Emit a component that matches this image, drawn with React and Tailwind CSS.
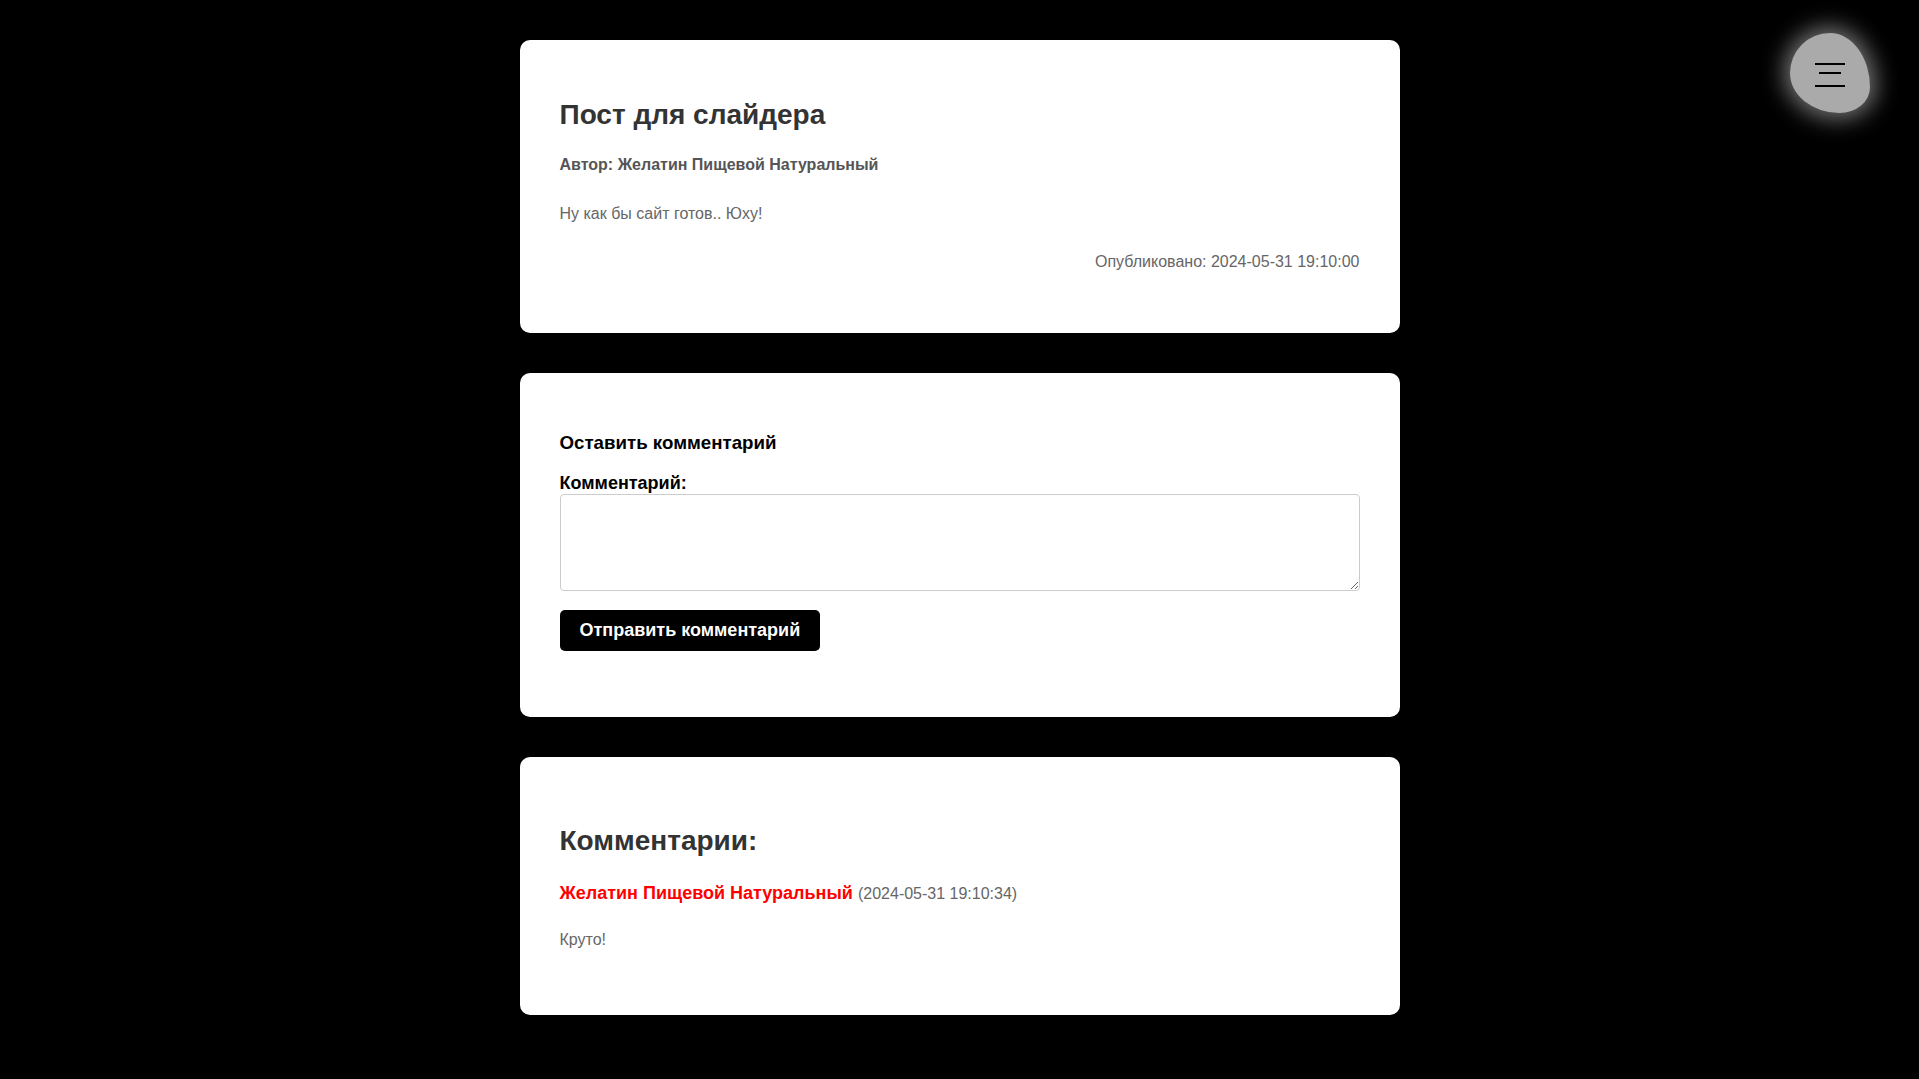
import { useState } from 'react'

const post = {
  title: 'Пост для слайдера',
  author: 'Желатин Пищевой Натуральный',
  body: 'Ну как бы сайт готов.. Юху!',
  published: '2024-05-31 19:10:00',
}

const comments = [
  { id: 1, author: 'Желатин Пищевой Натуральный', date: '2024-05-31 19:10:34', text: 'Круто!' },
]

const MenuButton = () => (
  <button
    className="fixed top-[33px] right-[49px] w-20 h-20 bg-[#aaaaaa] rounded-[50%_50%_38%_62%/50%_68%_32%_50%] shadow-[0_0_22px_6px_rgba(255,255,255,0.45)]"
    aria-label="menu"
  >
    <svg width="80" height="80" viewBox="0 0 80 80" className="block">
      <line x1="25" y1="31" x2="55" y2="31" stroke="#000" strokeWidth="2" />
      <line x1="29" y1="40" x2="51" y2="40" stroke="#000" strokeWidth="2" />
      <line x1="25" y1="53" x2="55" y2="53" stroke="#000" strokeWidth="2" />
    </svg>
  </button>
)

const App = () => {
  const [text, setText] = useState('')

  return (
    <div className="min-h-screen bg-black font-['Liberation_Sans',Arial,sans-serif] flex flex-col items-center gap-10 pt-10 pb-[65px]">
      {/* Post */}
      <div className="w-[880px] bg-white rounded-[10px] p-10">
        <h2 className="mt-[19px] text-[28px] leading-[32px] font-bold text-[#333]">{post.title}</h2>
        <p className="mt-[25px] text-base leading-[18px] font-bold text-[#555]">Автор: {post.author}</p>
        <p className="mt-[31px] text-base leading-[18px] text-[#666]">{post.body}</p>
        <p className="mt-[30px] mb-[22px] text-base leading-[18px] text-[#666] text-right">
          Опубликовано: {post.published}
        </p>
      </div>

      {/* Comment form */}
      <div className="w-[880px] bg-white rounded-[10px] p-10">
        <h3 className="mt-[19px] text-[18.72px] leading-[22px] font-bold text-black">Оставить комментарий</h3>
        <label className="block mt-[19px] text-[18px] leading-[21px] font-bold text-black">Комментарий:</label>
        <textarea
          value={text}
          onChange={(e) => setText(e.target.value)}
          className="block w-[800px] h-[97px] border border-[#ccc] rounded-[4px] p-2 text-base outline-none"
        />
        <button className="mt-[19px] mb-[26px] h-[41px] px-5 bg-black text-white text-[18px] font-bold rounded-[5px]">
          Отправить комментарий
        </button>
      </div>

      {/* Comments */}
      <div className="w-[880px] bg-white rounded-[10px] p-10">
        <h2 className="mt-[28px] text-[28px] leading-[32px] font-bold text-[#333]">Комментарии:</h2>
        {comments.map((c) => (
          <div key={c.id}>
            <p className="mt-[25px] text-[18px] leading-[21px]">
              <span className="font-bold text-[#ff0000]">{c.author}</span>{' '}
              <span className="text-base text-[#666]">({c.date})</span>
            </p>
            <p className="mt-[25px] mb-[26px] text-base leading-[18px] text-[#666]">{c.text}</p>
          </div>
        ))}
      </div>

      <MenuButton />
    </div>
  )
}

export default App
